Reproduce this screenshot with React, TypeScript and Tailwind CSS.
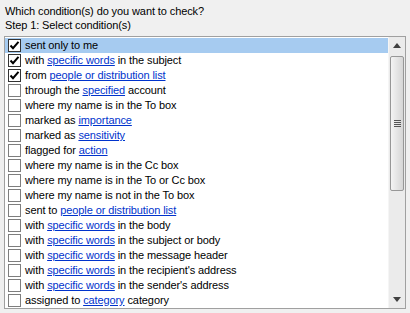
type Part = string | { link: string };

type Condition = {
  parts: Part[];
  checked?: boolean;
};

const conditions: Condition[] = [
  { parts: ["sent only to me"], checked: true },
  { parts: ["with ", { link: "specific words" }, " in the subject"], checked: true },
  { parts: ["from ", { link: "people or distribution list" }], checked: true },
  { parts: ["through the ", { link: "specified" }, " account"] },
  { parts: ["where my name is in the To box"] },
  { parts: ["marked as ", { link: "importance" }] },
  { parts: ["marked as ", { link: "sensitivity" }] },
  { parts: ["flagged for ", { link: "action" }] },
  { parts: ["where my name is in the Cc box"] },
  { parts: ["where my name is in the To or Cc box"] },
  { parts: ["where my name is not in the To box"] },
  { parts: ["sent to ", { link: "people or distribution list" }] },
  { parts: ["with ", { link: "specific words" }, " in the body"] },
  { parts: ["with ", { link: "specific words" }, " in the subject or body"] },
  { parts: ["with ", { link: "specific words" }, " in the message header"] },
  { parts: ["with ", { link: "specific words" }, " in the recipient's address"] },
  { parts: ["with ", { link: "specific words" }, " in the sender's address"] },
  { parts: ["assigned to ", { link: "category" }, " category"] },
];

const CheckBox = ({ checked }: { checked?: boolean }) => (
  <div
    className={`w-[13px] h-[13px] shrink-0 border bg-white flex items-center justify-center ${
      checked ? "border-[#333333]" : "border-[#7e7e7e]"
    }`}
  >
    {checked && (
      <svg width="11" height="11" viewBox="0 0 11 11">
        <path
          d="M1.5 5.5 L4 8.2 L9.5 1.8"
          fill="none"
          stroke="#000"
          strokeWidth="2"
        />
      </svg>
    )}
  </div>
);

const Row = ({ item, selected }: { item: Condition; selected: boolean }) => (
  <div
    className={`h-[15px] flex items-center gap-[4px] pl-[3px] whitespace-nowrap ${
      selected ? "bg-[#a6cbf0]" : ""
    }`}
  >
    <CheckBox checked={item.checked} />
    <span className="leading-[15px] text-black">
      {item.parts.map((p, i) =>
        typeof p === "string" ? (
          <span key={i}>{p}</span>
        ) : (
          <span key={i} className="text-[#0033cc] underline underline-offset-[1px]">
            {p.link}
          </span>
        )
      )}
    </span>
  </div>
);

const ScrollBar = () => (
  <div className="w-[17px] shrink-0 bg-[#ebebeb] border-l border-[#f5f5f5] flex flex-col">
    <div className="h-[17px] flex items-center justify-center">
      <svg width="8" height="5" viewBox="0 0 8 5">
        <path d="M4 0 L8 5 L0 5 Z" fill="#404040" />
      </svg>
    </div>
    <div className="mx-[1px] mt-[2px] h-[135px] rounded-[2px] border border-[#979797] bg-gradient-to-r from-[#f4f4f4] to-[#d6d6d6] flex flex-col items-center justify-center gap-[1px]">
      <div className="w-[7px] h-[1px] bg-[#555]" />
      <div className="w-[7px] h-[1px] bg-[#555]" />
      <div className="w-[7px] h-[1px] bg-[#555]" />
      <div className="w-[7px] h-[1px] bg-[#555]" />
    </div>
    <div className="flex-1" />
    <div className="h-[17px] flex items-center justify-center">
      <svg width="8" height="5" viewBox="0 0 8 5">
        <path d="M0 0 L8 0 L4 5 Z" fill="#404040" />
      </svg>
    </div>
  </div>
);

export default function App() {
  return (
    <div
      className="w-[410px] h-[313px] bg-[#f0f0f0] text-[11px] tracking-[-0.1px] text-black overflow-hidden"
      style={{ fontFamily: '"Liberation Sans", Arial, sans-serif' }}
    >
      <div className="pl-[5px] pt-[4px] leading-[14px]">
        Which condition(s) do you want to check?
      </div>
      <div className="pl-[5px] leading-[12px] pt-[1px]">Step 1: Select condition(s)</div>
      <div className="ml-[4px] mt-[5px] w-[402px] h-[273px] border border-[#a0a0a0] bg-white flex">
        <div className="flex-1 pt-[1px] overflow-hidden">
          {conditions.map((c, i) => (
            <Row key={i} item={c} selected={i === 0} />
          ))}
        </div>
        <ScrollBar />
      </div>
    </div>
  );
}
